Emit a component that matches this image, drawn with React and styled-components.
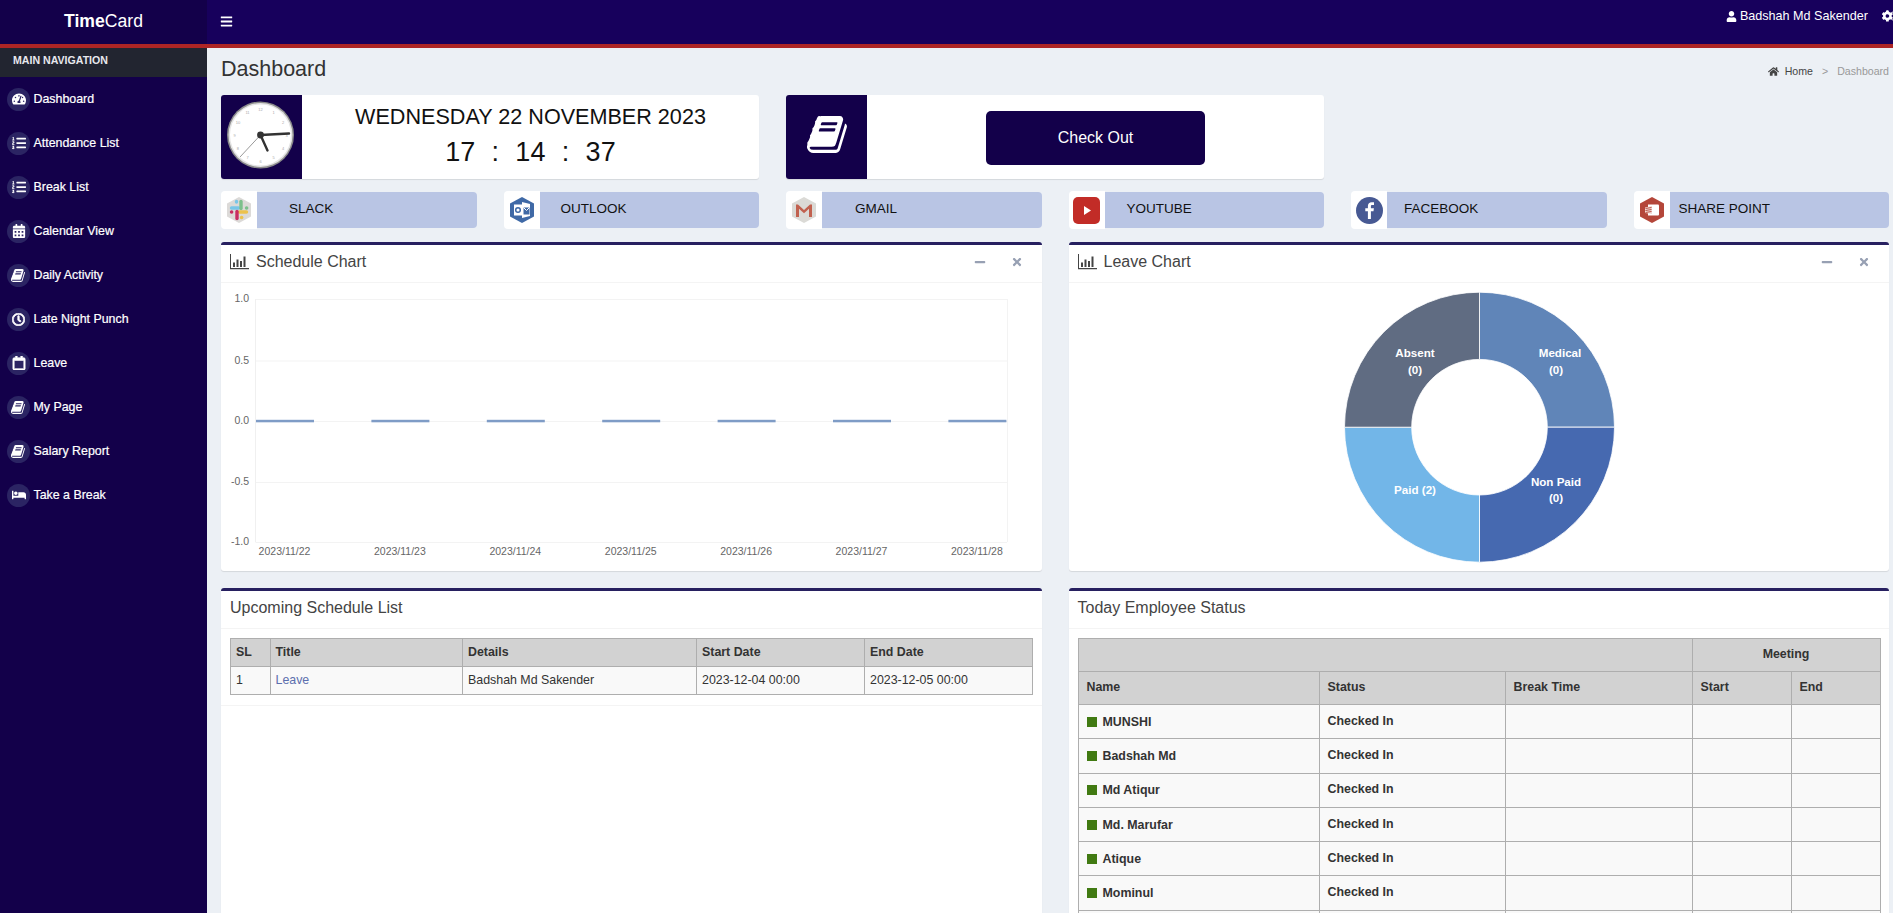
import React from 'react'
import styled, { createGlobalStyle } from 'styled-components'
import {
  FaBars, FaBed, FaCalendarAlt, FaCogs, FaHome, FaListOl, FaMinus, FaRegCalendar,
  FaRegClock, FaTachometerAlt, FaTimes, FaUser,
} from 'react-icons/fa'

const NAVY = '#13004a'

const GlobalStyle = createGlobalStyle`
  html, body {
    margin: 0;
    height: 100%;
    overflow: hidden;
  }
  body {
    font-family: "Liberation Sans", Arial, sans-serif;
    background: #ecf0f5;
    color: #333;
  }
`

const Page = styled.div`
  height: 100vh;
  display: flex;
  flex-direction: column;
  overflow: hidden;
`

const Header = styled.header`
  flex: none;
  display: flex;
  height: 44px;
  border-bottom: 4px solid #ad2525;
`

const Brand = styled.div`
  width: 207px;
  flex: none;
  box-sizing: border-box;
  padding-bottom: 2px;
  background: ${NAVY};
  color: #fff;
  font-size: 17.6px;
  display: flex;
  align-items: center;
  justify-content: center;
  b { font-weight: 700; }
`

const Navbar = styled.nav`
  flex: 1;
  min-width: 0;
  background: #17005c;
  color: #fff;
  display: flex;
  justify-content: space-between;
  padding-left: 13px;
  font-size: 12.6px;
`

const MenuButton = styled.span`
  display: flex;
  align-items: center;
  height: 42px;
  font-size: 13px;
`

const UserArea = styled.div`
  display: flex;
  align-items: center;
  height: 32px;
  margin-right: -5px;
  svg:first-child { font-size: 11px; margin-right: 3px; }
`

const Gear = styled(FaCogs)`
  font-size: 16px;
  margin-left: 14px;
`

const Body = styled.div`
  flex: 1;
  min-height: 0;
  display: flex;
`

const Sidebar = styled.aside`
  width: 207px;
  flex: none;
  background: ${NAVY};
`

const SideTitle = styled.div`
  height: 29px;
  background: #222530;
  color: #e8e8ee;
  display: flex;
  align-items: center;
  padding: 0 0 5px 13px;
  box-sizing: border-box;
  font-size: 10.6px;
  font-weight: 700;
`

const NavItem = styled.a`
  height: 44px;
  padding-left: 7px;
  display: flex;
  align-items: center;
  gap: 3.5px;
  color: #fff;
  font-size: 12.4px;
  -webkit-text-stroke: 0.2px #fff;
`

const NavIcon = styled.span`
  width: 23px;
  height: 23px;
  border-radius: 50%;
  background: #2b2463;
  display: flex;
  align-items: center;
  justify-content: center;
  font-size: 14px;
`

const BoldClock = styled(FaRegClock)`
  stroke: currentColor;
  stroke-width: 30px;
  font-size: 13px;
`

const BoldCalendar = styled(FaRegCalendar)`
  stroke: currentColor;
  stroke-width: 24px;
  font-size: 14px;
`

const Main = styled.main`
  flex: 1;
  min-width: 0;
  padding: 0 4px 0 14px;
`

const TitleRow = styled.div`
  height: 43px;
  margin-bottom: 4px;
  display: flex;
  align-items: center;
  justify-content: space-between;
`

const PageTitle = styled.h1`
  margin: 0;
  font-size: 21.5px;
  font-weight: 400;
  color: #333;
`

const Breadcrumb = styled.div`
  display: flex;
  align-items: center;
  font-size: 10.6px;
  color: #444;
  margin-top: 3px;
  svg { font-size: 11px; margin-right: 6px; }
`

const Crumb = styled.span`
  color: ${p => (p.$muted ? '#999' : 'inherit')};
  margin-left: ${p => p.$gap || 0}px;
`

const TopGrid = styled.div`
  display: grid;
  grid-template-columns: repeat(6, 1fr);
  column-gap: 27px;
  row-gap: 12px;
`

const InfoCard = styled.section`
  grid-column: span 2;
  height: 84px;
  display: flex;
  background: #fff;
  border-radius: 3px;
  overflow: hidden;
  box-shadow: 0 1px 1px rgba(0, 0, 0, 0.1);
`

const InfoIcon = styled.div`
  width: 81px;
  flex: none;
  box-sizing: border-box;
  padding: 0 0 ${p => p.$lift || 0}px ${p => p.$nudge || 0}px;
  background: ${NAVY};
  display: flex;
  align-items: center;
  justify-content: center;
`

const InfoContent = styled.div`
  flex: 1;
  display: flex;
  flex-direction: column;
  align-items: center;
  justify-content: center;
  color: #111;
`

const DateLine = styled.div`
  font-size: 21.6px;
  line-height: 26px;
  margin: -2px 0 5px;
`

const TimeLine = styled.div`
  display: flex;
  gap: 16px;
  font-size: 27px;
  line-height: 34px;
  letter-spacing: 0.2px;
`

const CheckButton = styled.button`
  width: 219px;
  height: 54px;
  margin-top: 1px;
  border: 0;
  border-radius: 5px;
  background: ${NAVY};
  color: #fff;
  font: 16px "Liberation Sans", Arial, sans-serif;
`

const Spacer = styled.div`
  grid-column: span 2;
`

const LinkCard = styled.a`
  height: 38px;
  display: flex;
  align-items: center;
  color: #111;
  font-size: 13.5px;
`

const LinkTile = styled.span`
  width: 36px;
  height: 38px;
  flex: none;
  background: #fff;
  border-radius: 4px 0 0 4px;
  display: flex;
  align-items: center;
  justify-content: center;
`

const LinkBar = styled.span`
  flex: 1;
  height: 36px;
  display: flex;
  align-items: center;
  padding: 0 0 4px ${p => p.$indent}px;
  box-sizing: border-box;
  background: #b9c5e4;
  border-radius: 0 4px 4px 0;
`

const BoxGrid = styled.div`
  display: grid;
  grid-template-columns: 1fr 1fr;
  column-gap: 27px;
  row-gap: 17px;
  margin-top: 13px;
`

const Box = styled.section`
  background: #fff;
  border-top: 3px solid #272060;
  border-radius: 3px;
  box-shadow: 0 1px 1px rgba(0, 0, 0, 0.1);
  min-width: 0;
`

const BoxHeader = styled.div`
  height: 33px;
  padding: 0 9px 4px;
  border-bottom: 1px solid #f4f4f4;
  display: flex;
  align-items: center;
  gap: 7px;
`

const BoxTitle = styled.h3`
  margin: 0;
  flex: 1;
  font-size: 16px;
  font-weight: 400;
  color: #444;
`

const BoxTools = styled.div`
  display: flex;
  gap: 25px;
  margin-right: 10px;
  color: #97a0b3;
  font-size: 12px;
  svg { display: block; }
`

const ChartArea = styled.div`
  height: 288px;
  display: flex;
  justify-content: center;
  svg { display: block; }
`

const TableArea = styled.div`
  padding: 9px 9px 10px;
`

const FooterLine = styled.div`
  border-top: 1px solid #f4f4f4;
`

const Table = styled.table`
  width: 100%;
  table-layout: fixed;
  border-collapse: collapse;
  font-size: 12.4px;
  color: #333;
`

const Th = styled.th`
  height: ${p => p.$h || 25}px;
  padding: 0 ${p => p.$pad || 5}px 2px;
  background: #d2d2d2;
  border: 1px solid #aeaeae;
  font-weight: 700;
  text-align: ${p => (p.$center ? 'center' : 'left')};
`

const Td = styled.td`
  height: ${p => p.$h || 25}px;
  padding: 0 ${p => p.$pad || 5}px 2px;
  background: #f9f9f9;
  border: 1px solid #aeaeae;
  font-weight: ${p => (p.$bold ? 700 : 400)};
`

const LinkText = styled.a`
  color: #5c6fae;
`

const NameCell = styled.span`
  display: flex;
  align-items: center;
  gap: 6px;
  margin-top: 2px;
`

const StatusMark = styled.i`
  width: 10px;
  height: 10px;
  background: #417a12;
`

const bookPath = 'M1639 478q40 57 18 129l-275 906q-19 64-76.5 107.5t-122.5 43.5h-923q-77 0-148.5-53.5t-99.5-131.5q-24-67-2-127 0-4 3-27t4-37q1-8-3-21.5t-3-19.5q2-11 8-21t16.5-23.5 16.5-23.5q23-38 45-91.5t30-91.5q3-10 .5-30t-.5-28q3-11 17-28t17-23q21-36 42-92t25-90q1-9-2.5-32t.5-28q4-13 22-30.5t22-22.5q19-26 42.5-84.5t27.5-96.5q1-8-3-25.5t-2-26.5q2-8 9-18t18-23 17-21q8-12 16.5-30.5t15-35 16-36 19.5-32 26.5-23.5 36-11.5 47.5 5.5l-1 3q38-9 51-9h761q74 0 114 56t18 130l-274 906q-36 119-71.5 153.5t-128.5 34.5h-869q-27 0-38 15-11 16-1 43 24 70 144 70h923q29 0 56-15.5t35-41.5l300-987q7-22 5-57 38 15 59 43zm-1064 2q-4 13 2 22.5t20 9.5h608q13 0 25.5-9.5t16.5-22.5l21-64q4-13-2-22.5t-20-9.5h-608q-13 0-25.5 9.5t-16.5 22.5zm-83 256q-4 13 2 22.5t20 9.5h608q13 0 25.5-9.5t16.5-22.5l21-64q4-13-2-22.5t-20-9.5h-608q-13 0-25.5 9.5t-16.5 22.5z'

const BookIcon = ({ size = 42, fill = '#fff' }) => (
  <svg width={size} height={size} viewBox="0 0 1792 1792" fill={fill}>
    <path d={bookPath} />
  </svg>
)

const SmallBook = () => <BookIcon size={15} />

const navItems = [
  { label: 'Dashboard', icon: <FaTachometerAlt /> },
  { label: 'Attendance List', icon: <FaListOl /> },
  { label: 'Break List', icon: <FaListOl /> },
  { label: 'Calendar View', icon: <FaCalendarAlt /> },
  { label: 'Daily Activity', icon: <SmallBook /> },
  { label: 'Late Night Punch', icon: <BoldClock /> },
  { label: 'Leave', icon: <BoldCalendar /> },
  { label: 'My Page', icon: <SmallBook /> },
  { label: 'Salary Report', icon: <SmallBook /> },
  { label: 'Take a Break', icon: <FaBed /> },
]

const clockNumbers = [12, 1, 2, 3, 4, 5, 6, 7, 8, 9, 10, 11]

const ClockFace = () => (
  <svg width="81" height="84" viewBox="0 0 81 84">
    <circle cx="39.5" cy="40" r="33.5" fill="#8c8c8c" />
    <circle cx="39.5" cy="40" r="32" fill="#e4e4e4" />
    <circle cx="39.5" cy="40" r="30.5" fill="#fff" />
    {clockNumbers.map((n, i) => {
      const a = (i * Math.PI) / 6
      return (
        <text key={n} x={39.5 + Math.sin(a) * 26} y={41.5 - Math.cos(a) * 26} fontSize="4" fill="#aaa" textAnchor="middle">
          {n}
        </text>
      )
    })}
    <line x1="39.5" y1="40" x2="19" y2="62" stroke="#999" strokeWidth="1" />
    <line x1="39.5" y1="40" x2="46.5" y2="55.5" stroke="#333" strokeWidth="2.4" strokeLinecap="round" />
    <line x1="39.5" y1="40" x2="68" y2="38.5" stroke="#333" strokeWidth="2.4" strokeLinecap="round" />
    <circle cx="39.5" cy="40" r="3.4" fill="#333" />
  </svg>
)

const SlackLogo = () => (
  <svg width="28" height="28" viewBox="0 0 28 28">
    <path d="M14 1l12 6.500v13L14 27 2 20.500v-13z" fill="#dcdad8" />
    <g strokeWidth="3.4" strokeLinecap="round" fill="none">
      <path d="M6.500 12h7" stroke="#78c6e8" />
      <path d="M11.500 5.500v.5" stroke="#78c6e8" />
      <path d="M16 5.500v7" stroke="#7cc08c" />
      <path d="M21.500 12h.2" stroke="#7cc08c" />
      <path d="M14.500 16h7" stroke="#ecc24d" />
      <path d="M16.500 21.500h.2" stroke="#ecc24d" />
      <path d="M12 15.500v7" stroke="#c92d62" />
      <path d="M6.500 16h.2" stroke="#c92d62" />
    </g>
  </svg>
)

const OutlookLogo = () => (
  <svg width="28" height="28" viewBox="0 0 28 28">
    <path d="M14 1l12 6.500v13L14 27 2 20.500v-13z" fill="#3f69a6" />
    <path d="M14 6l8 2v12l-8 2z" fill="#fff" />
    <path d="M15.500 11.500h6v7h-6z" fill="#3f69a6" />
    <path d="M15.500 11.500l3 3 3-3" fill="none" stroke="#fff" strokeWidth="1" />
    <rect x="6" y="8.500" width="8.500" height="11" fill="#fff" />
    <circle cx="10" cy="14" r="2.300" fill="none" stroke="#3f69a6" strokeWidth="1.500" />
  </svg>
)

const GmailLogo = () => (
  <svg width="28" height="28" viewBox="0 0 28 28">
    <path d="M14 1l12 6.500v13L14 27 2 20.500v-13z" fill="#dbdad6" />
    <path d="M6 21V8.500h2l6 5.500 6-5.500h2V21h-3V12.800l-5 4.500-5-4.500V21z" fill="#c1614f" />
  </svg>
)

const YoutubeLogo = () => (
  <svg width="27" height="27" viewBox="0 0 27 27">
    <rect width="27" height="27" rx="5" fill="#c22c27" />
    <path d="M11 9l7 4.500-7 4.500z" fill="#fff" />
  </svg>
)

const FacebookLogo = () => (
  <svg width="27" height="27" viewBox="0 0 27 27">
    <circle cx="13.500" cy="13.500" r="13.500" fill="#475993" />
    <path d="M14.900 22v-7.700h2.600l.4-3h-3V9.400c0-.9.3-1.400 1.500-1.400h1.600V5.300c-.3 0-1.200-.1-2.300-.1-2.300 0-3.800 1.400-3.800 3.900v2.200H9.300v3h2.600V22z" fill="#fff" />
  </svg>
)

const SharePointLogo = () => (
  <svg width="28" height="28" viewBox="0 0 28 28">
    <path d="M14 1l12 6.500v13L14 27 2 20.500v-13z" fill="#b4463a" />
    <path d="M10 8.500h10a1 1 0 0 1 1 1v9a1 1 0 0 1-1 1H10z" fill="#fff" />
    <path d="M7 11.500l7-1.500v8l-7-1z" fill="#f1d9d5" />
    <path d="M7.500 12.500l6-1M7.500 14.500l6-1M7.500 16.500l6-1" stroke="#b4463a" strokeWidth="0.900" />
  </svg>
)

const links = [
  { label: 'SLACK', logo: <SlackLogo />, indent: 32 },
  { label: 'OUTLOOK', logo: <OutlookLogo />, indent: 21 },
  { label: 'GMAIL', logo: <GmailLogo />, indent: 33 },
  { label: 'YOUTUBE', logo: <YoutubeLogo />, indent: 22 },
  { label: 'FACEBOOK', logo: <FacebookLogo />, indent: 17 },
  { label: 'SHARE POINT', logo: <SharePointLogo />, indent: 9 },
]

const BarChartIcon = () => (
  <svg width="19" height="16" viewBox="0 0 19 16" fill="#444">
    <path d="M0 0h1v14h18v1.200H0z" />
    <rect x="3" y="8.500" width="2" height="4.500" />
    <rect x="6.500" y="5.500" width="2" height="7.500" />
    <rect x="10" y="7" width="2" height="6" />
    <rect x="13.500" y="2.500" width="2" height="10.500" />
  </svg>
)

const yTicks = [
  { label: '1.0', y: 16 },
  { label: '0.5', y: 77.500 },
  { label: '0.0', y: 138 },
  { label: '-0.5', y: 199 },
  { label: '-1.0', y: 259 },
]

const dates = ['2023/11/22', '2023/11/23', '2023/11/24', '2023/11/25', '2023/11/26', '2023/11/27', '2023/11/28']

const ScheduleChart = () => (
  <svg width="820" height="288" fontFamily="'Liberation Sans', Arial, sans-serif" fontSize="10.500" fill="#666">
    {yTicks.map(t => (
      <g key={t.label}>
        <line x1="34.500" x2="786" y1={t.y + 0.5} y2={t.y + 0.5} stroke="#f3f3f3" />
        <text x="28" y={t.y + 3} textAnchor="end">{t.label}</text>
      </g>
    ))}
    <line x1="34.500" x2="34.500" y1="16" y2="259" stroke="#f0f0f0" />
    <line x1="786.500" x2="786.500" y1="16" y2="259" stroke="#f3f3f3" />
    {dates.map((d, i) => (
      <g key={d}>
        <rect x={35 + i * 115.4} y="136.800" width="58" height="2.500" fill="#7f9cc6" />
        <text x={63.500 + i * 115.4} y="272" textAnchor="middle">{d}</text>
      </g>
    ))}
  </svg>
)

// ring quadrant from the start angle going clockwise, angles in quarter turns from 12 o'clock
const CX = 145.500
const CY = 144.200
const OUTER = 135
const INNER = 67.800

const point = (r, q) => {
  const a = (q * Math.PI) / 2
  return `${CX + Math.sin(a) * r} ${CY - Math.cos(a) * r}`
}

const quadrant = q =>
  `M${point(OUTER, q)} A${OUTER} ${OUTER} 0 0 1 ${point(OUTER, q + 1)} L${point(INNER, q + 1)} A${INNER} ${INNER} 0 0 0 ${point(INNER, q)} Z`

const slices = [
  { q: 0, fill: '#6085b8' },
  { q: 1, fill: '#4669b0' },
  { q: 2, fill: '#72b6e8' },
  { q: 3, fill: '#606c82' },
]

const sliceLabels = [
  { text: 'Absent', x: 81, y: 74 },
  { text: '(0)', x: 81, y: 91 },
  { text: 'Medical', x: 226, y: 74 },
  { text: '(0)', x: 222, y: 91 },
  { text: 'Non Paid', x: 222, y: 203 },
  { text: '(0)', x: 222, y: 219 },
  { text: 'Paid (2)', x: 81, y: 211 },
]

const LeaveChart = () => (
  <svg width="289" height="288" fontFamily="'Liberation Sans', Arial, sans-serif" fontSize="11.600" fontWeight="700" fill="#fff">
    {slices.map(s => (
      <path key={s.fill} d={quadrant(s.q)} fill={s.fill} stroke="#fff" strokeWidth="0.800" />
    ))}
    {sliceLabels.map(l => (
      <text key={l.text + l.x + l.y} x={l.x} y={l.y} textAnchor="middle">{l.text}</text>
    ))}
  </svg>
)

const employees = ['MUNSHI', 'Badshah Md', 'Md Atiqur', 'Md. Marufar', 'Atique', 'Mominul']

const App = () => {
  return (
    <Page>
      <GlobalStyle />
      <Header>
        <Brand><b>Time</b>Card</Brand>
        <Navbar>
          <MenuButton><FaBars /></MenuButton>
          <UserArea>
            <FaUser />
            Badshah Md Sakender
            <Gear />
          </UserArea>
        </Navbar>
      </Header>
      <Body>
        <Sidebar>
          <SideTitle>MAIN NAVIGATION</SideTitle>
          {navItems.map(item => (
            <NavItem key={item.label}>
              <NavIcon>{item.icon}</NavIcon>
              {item.label}
            </NavItem>
          ))}
        </Sidebar>
        <Main>
          <TitleRow>
            <PageTitle>Dashboard</PageTitle>
            <Breadcrumb>
              <FaHome />
              <span>Home</span>
              <Crumb $muted $gap={9}>&gt;</Crumb>
              <Crumb $muted $gap={9}>Dashboard</Crumb>
            </Breadcrumb>
          </TitleRow>
          <TopGrid>
            <InfoCard>
              <InfoIcon><ClockFace /></InfoIcon>
              <InfoContent>
                <DateLine>WEDNESDAY 22 NOVEMBER 2023</DateLine>
                <TimeLine>
                  <span>17</span><span>:</span><span>14</span><span>:</span><span>37</span>
                </TimeLine>
              </InfoContent>
            </InfoCard>
            <InfoCard>
              <InfoIcon $lift={6} $nudge={4}><BookIcon size={43} /></InfoIcon>
              <InfoContent>
                <CheckButton>Check Out</CheckButton>
              </InfoContent>
            </InfoCard>
            <Spacer />
            {links.map(link => (
              <LinkCard key={link.label}>
                <LinkTile>{link.logo}</LinkTile>
                <LinkBar $indent={link.indent}>{link.label}</LinkBar>
              </LinkCard>
            ))}
          </TopGrid>
          <BoxGrid>
            <Box>
              <BoxHeader>
                <BarChartIcon />
                <BoxTitle>Schedule Chart</BoxTitle>
                <BoxTools><FaMinus /><FaTimes /></BoxTools>
              </BoxHeader>
              <ChartArea><ScheduleChart /></ChartArea>
            </Box>
            <Box>
              <BoxHeader>
                <BarChartIcon />
                <BoxTitle>Leave Chart</BoxTitle>
                <BoxTools><FaMinus /><FaTimes /></BoxTools>
              </BoxHeader>
              <ChartArea><LeaveChart /></ChartArea>
            </Box>
            <Box>
              <BoxHeader><BoxTitle>Upcoming Schedule List</BoxTitle></BoxHeader>
              <TableArea>
                <Table>
                  <colgroup>
                    <col width="39.5" /><col width="192.5" /><col width="234" /><col width="168" /><col width="168" />
                  </colgroup>
                  <thead>
                    <tr>
                      <Th>SL</Th><Th>Title</Th><Th>Details</Th><Th>Start Date</Th><Th>End Date</Th>
                    </tr>
                  </thead>
                  <tbody>
                    <tr>
                      <Td>1</Td>
                      <Td><LinkText>Leave</LinkText></Td>
                      <Td>Badshah Md Sakender</Td>
                      <Td>2023-12-04 00:00</Td>
                      <Td>2023-12-05 00:00</Td>
                    </tr>
                  </tbody>
                </Table>
              </TableArea>
              <FooterLine />
            </Box>
            <Box>
              <BoxHeader><BoxTitle>Today Employee Status</BoxTitle></BoxHeader>
              <TableArea>
                <Table>
                  <colgroup>
                    <col width="241" /><col width="186" /><col width="187" /><col width="99" /><col width="89" />
                  </colgroup>
                  <thead>
                    <tr>
                      <Th colSpan={3} $h={30} $pad={8} />
                      <Th colSpan={2} $h={30} $center>Meeting</Th>
                    </tr>
                    <tr>
                      <Th $h={30} $pad={8}>Name</Th>
                      <Th $h={30} $pad={8}>Status</Th>
                      <Th $h={30} $pad={8}>Break Time</Th>
                      <Th $h={30} $pad={8}>Start</Th>
                      <Th $h={30} $pad={8}>End</Th>
                    </tr>
                  </thead>
                  <tbody>
                    {employees.map(name => (
                      <tr key={name}>
                        <Td $h={31.3} $pad={8} $bold>
                          <NameCell><StatusMark />{name}</NameCell>
                        </Td>
                        <Td $h={31.3} $pad={8} $bold>Checked In</Td>
                        <Td $h={31.3} />
                        <Td $h={31.3} />
                        <Td $h={31.3} />
                      </tr>
                    ))}
                    <tr>
                      <Td $h={31.3} /><Td $h={31.3} /><Td $h={31.3} /><Td $h={31.3} /><Td $h={31.3} />
                    </tr>
                  </tbody>
                </Table>
              </TableArea>
            </Box>
          </BoxGrid>
        </Main>
      </Body>
    </Page>
  )
}

export default App
